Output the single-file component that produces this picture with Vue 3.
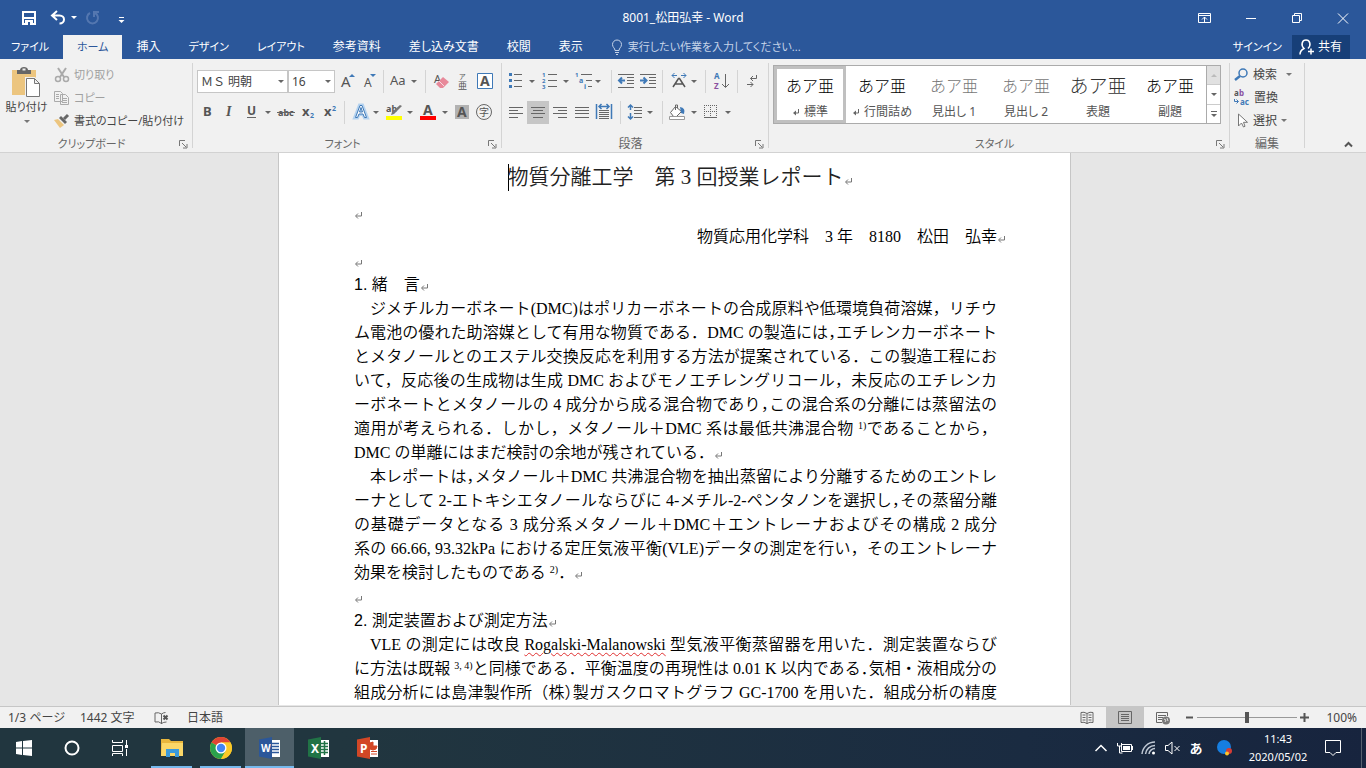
<script setup>
import { ref } from 'vue'

const tabs = ['ホーム', '挿入', 'デザイン', 'レイアウト', '参考資料', '差し込み文書', '校閲', '表示']
const activeTab = ref('ホーム')
const isKana = (t) => /^[ァ-ー]+$/.test(t)
const styles = [
  { name: '標準', mark: true, cls: '' },
  { name: '行間詰め', mark: true, cls: '' },
  { name: '見出し 1', cls: 'light' },
  { name: '見出し 2', cls: 'light' },
  { name: '表題', cls: 'big' },
  { name: '副題', cls: '' },
]
const activeStyle = ref('標準')
const zoom = ref(100)
</script>

<template>
  <div class="app" lang="ja">
    <svg class="defs" width="0" height="0" aria-hidden="true">
      <defs>
        <path id="dd" d="M0 0h6l-3 3z" />
        <path id="ret" d="M7.500 1v4H2M4 2.500L1.500 5 4 7.500" fill="none" stroke="#777" />
        <path id="launch" d="M.500 6V.500H6M3 3l4 4M8 4v4H4" fill="none" stroke="#777" />
      </defs>
    </svg>

    <header class="head">
      <div class="titlebar">
        <div class="quick">
          <button aria-label="上書き保存"><svg width="29" height="30" viewBox="14 0 29 30"><path d="M23 9h12v12H23z" fill="none" stroke="#fff" stroke-width="2" /><path d="M23 14h12v2H23zM25 17h8v5h-8z" fill="#fff" /><path d="M28 19h2v3h-2z" fill="#2b579a" /></svg></button>
          <button aria-label="元に戻す"><svg width="37" height="30" viewBox="43 0 37 30"><path d="M57 8l-5 4.500 5 4.500M52.500 12.500h7c6 0 6 8 0 8" fill="none" stroke="#fff" stroke-width="2" /><use href="#dd" x="71" y="13" fill="#fff" /></svg></button>
          <button aria-label="やり直し"><svg width="30" height="30" viewBox="80 0 30 30"><path d="M90 10a5.500 5.500 0 1 0 5 0M94 14V9h5" fill="none" stroke="#5477b0" stroke-width="2" /></svg></button>
          <button aria-label="クイック アクセス ツール バーのユーザー設定"><svg width="22" height="30" viewBox="110 0 22 30"><path d="M119 14.500h5" stroke="#fff" /><use href="#dd" x="118.500" y="17" fill="#fff" /></svg></button>
        </div>
        <h1>8001_松田弘幸 - Word</h1>
        <div class="win">
          <button aria-label="リボンの表示オプション"><svg width="46" height="30" viewBox="1182 0 46 30"><path d="M1198.500 10.500h12v9h-12zM1198 12.500h12M1204.500 19v-5M1202 16.500l2.500-2.500 2.500 2.500" fill="none" stroke="#fff" /></svg></button>
          <button aria-label="最小化"><svg width="46" height="30" viewBox="1228 0 46 30"><path d="M1246 15.500h10" stroke="#fff" /></svg></button>
          <button aria-label="元に戻す (縮小)"><svg width="46" height="30" viewBox="1274 0 46 30"><path d="M1292.500 12.500h7v7h-7zM1294.500 12v-1.500h7v7H1300" fill="none" stroke="#fff" /></svg></button>
          <button aria-label="閉じる"><svg width="46" height="30" viewBox="1320 0 46 30"><path d="M1338 10.500l10 10m0-10l-10 10" stroke="#fff" /></svg></button>
        </div>
      </div>
      <nav class="tabs">
        <button class="file kana">ファイル</button>
        <button v-for="t in tabs" :key="t" :class="{ on: t === activeTab, kana: isKana(t) }" @click="activeTab = t">{{ t }}</button>
        <label class="tell">
          <svg width="12" height="16" viewBox="0 0 12 16"><path d="M4 11.500C4 9 1.500 8.500 1.500 5.500a4.500 4.500 0 0 1 9 0C10.500 8.500 8 9 8 11.500zM4 13.500h4M5 15.500h2" fill="none" stroke="#c5d3e8" /></svg>
          <input type="text" aria-label="操作アシスト" placeholder="実行したい作業を入力してください...">
        </label>
        <button class="sign kana">サインイン</button>
        <button class="share"><svg width="17" height="18" viewBox="0 0 17 18"><path d="M2 16.500c0-3 2-5 4-6C2.500 7 4 2 8 2s5.500 5 2 8.500M10 13.500h6M13 10.500v6" fill="none" stroke="#fff" stroke-width="1.500" /></svg>共有</button>
      </nav>
    </header>

    <section class="ribbon">
      <div class="group clip">
        <div class="body cliprow">
          <button class="paste">
            <svg width="32" height="32" viewBox="14 66 32 32"><path d="M15 70h24v25H15z" fill="#ecc57f" /><path d="M20 74v-4h3c0-4 8-4 8 0h3v4z" fill="#666" /><path d="M25.500 69.500h3" stroke="#eee" stroke-width="2" /><path d="M28 77h10l6 6v15H28z" fill="#f1f1f1" /><path d="M29.500 78.500h8l5 5v13h-13zM37.500 78.500v5h5" fill="#fff" stroke="#777" /></svg>
            <span>貼り付け</span>
            <svg width="6" height="8" viewBox="0 0 6 8"><use href="#dd" y="4" fill="#777" /></svg>
          </button>
          <div class="stack">
            <button class="off"><svg width="16" height="16" viewBox="0 0 16 16"><path d="M4 1l6 9M12 1L6 10" stroke="#aaa" stroke-width="2" /><circle cx="4" cy="12" r="2.500" fill="none" stroke="#aaa" stroke-width="1.500" /><circle cx="12" cy="12" r="2.500" fill="none" stroke="#aaa" stroke-width="1.500" /></svg>切り取り</button>
            <button class="off"><svg width="16" height="16" viewBox="0 0 16 16"><path d="M.500 1.500h6l2 2v8h-8zM6.500 4.500h5l3 3v7h-8z" fill="#f1f1f1" stroke="#aaa" /><path d="M2 4.500h3M2 6.500h3M2 8.500h3M8 8.500h5M8 10.500h5M8 12.500h5" stroke="#aaa" /></svg>コピー</button>
            <button><svg width="16" height="16" viewBox="0 0 16 16"><path d="M0 7l4-1 6 6-4 3z" fill="#ecc57f" /><path d="M5 5l2-2 6 6-2 2z" fill="#666" /><path d="M10 6l4-4" stroke="#666" stroke-width="3" /></svg>書式のコピー/貼り付け</button>
          </div>
        </div>
        <div class="foot kana"><span>クリップボード</span><button aria-label="クリップボード"><svg width="9" height="9"><use href="#launch" /></svg></button></div>
      </div>

      <div class="group font">
        <div class="body rows">
          <div class="row">
            <span class="combo name"><select aria-label="フォント"><option>ＭＳ 明朝</option></select><svg width="6" height="3"><use href="#dd" fill="#666" /></svg></span>
            <span class="combo size"><select aria-label="フォント サイズ"><option>16</option></select><svg width="6" height="3"><use href="#dd" fill="#666" /></svg></span>
            <button aria-label="フォント サイズの拡大"><svg width="24" height="23" viewBox="335 70 24 23"><text x="341" y="87" class="g" font-size="15">A</text><path d="M349 77h6l-3-3z" class="bf" /></svg></button>
            <button aria-label="フォント サイズの縮小"><svg width="24" height="23" viewBox="359 70 24 23"><text x="364" y="87" class="g" font-size="12">A</text><path d="M370 74h6l-3 3z" class="bf" /></svg></button>
            <i class="sep"></i>
            <button aria-label="文字種の変換"><svg width="41" height="23" viewBox="384 70 41 23"><text x="390" y="85" class="g" font-size="13">Aa</text><use href="#dd" x="411" y="80" fill="#666" /></svg></button>
            <i class="sep"></i>
            <button aria-label="書式のクリア"><svg width="28" height="23" viewBox="426 70 28 23"><text x="434" y="83" class="g" font-size="11">A</text><path d="M436 84l7-7 6 5-6 6h-3z" fill="#e8899a" /><path d="M439 81l5 5" stroke="#f6dbe0" /></svg></button>
            <button aria-label="ルビ"><svg width="19" height="23" viewBox="454 70 19 23"><text x="459" y="79" class="g" font-size="7">ア</text><text x="458" y="89" class="g" font-size="9">亜</text></svg></button>
            <button aria-label="囲み線"><svg width="24" height="23" viewBox="473 70 24 23"><path d="M477.500 73.500h15v15h-15z" fill="#fff" stroke="#3f79b7" /><text x="480" y="86" class="g bold" font-size="14">A</text></svg></button>
          </div>
          <div class="row">
            <button aria-label="太字"><svg width="21" height="23" viewBox="197 101 21 23"><text x="203" y="116" class="g bold" font-size="13">B</text></svg></button>
            <button aria-label="斜体"><svg width="22" height="23" viewBox="218 101 22 23"><text x="226" y="116" class="g ital" font-size="14">I</text></svg></button>
            <button aria-label="下線"><svg width="34" height="23" viewBox="240 101 34 23"><text x="247" y="115" class="g bold" font-size="12">U</text><path d="M247 117.500h9" class="gs" /><use href="#dd" x="265" y="111" fill="#666" /></svg></button>
            <button aria-label="取り消し線"><svg width="24" height="23" viewBox="274 101 24 23"><text x="278" y="116" class="g bold" font-size="9">abc</text><path d="M277 112.500h18" class="gs" /></svg></button>
            <button aria-label="下付き"><svg width="22" height="23" viewBox="298 101 22 23"><text x="302" y="116" class="g bold" font-size="13">x</text><text x="310" y="118" class="bf bold" font-size="7">2</text></svg></button>
            <button aria-label="上付き"><svg width="24" height="23" viewBox="320 101 24 23"><text x="324" y="116" class="g bold" font-size="13">x</text><text x="332" y="111" class="bf bold" font-size="7">2</text></svg></button>
            <i class="sep"></i>
            <button aria-label="文字の効果と体裁"><svg width="37" height="23" viewBox="345 101 37 23"><path d="M354.500 118l5-13h3l5 13h-3l-1.500-3.500h-4l-1.500 3.500zM359.500 112h3l-1.500-4z" fill="#fff" fill-rule="evenodd" stroke="#b5d3f0" stroke-width="3" /><path d="M355.500 117.500l4.500-12h2l4.500 12h-2l-1.500-3.500h-4l-1.500 3.500zM359.500 112h3l-1.500-4.500z" fill="#fff" fill-rule="evenodd" stroke="#3f79b7" /><use href="#dd" x="373" y="111" fill="#666" /></svg></button>
            <button aria-label="蛍光ペンの色"><svg width="34" height="23" viewBox="382 101 34 23"><text x="386" y="112" class="g bold" font-size="9">ab</text><path d="M402 106l-8 8-3 1 1-3 8-7z" fill="#777" /><path d="M386 116h16v4h-16z" fill="#ff0" /><use href="#dd" x="407" y="111" fill="#666" /></svg></button>
            <button aria-label="フォントの色"><svg width="35" height="23" viewBox="416 101 35 23"><text x="423" y="115" class="g bold" font-size="14">A</text><path d="M420 116h16v4h-16z" fill="red" /><use href="#dd" x="442" y="111" fill="#666" /></svg></button>
            <button aria-label="文字の網かけ"><svg width="22" height="23" viewBox="451 101 22 23"><path d="M455 105h14v14h-14z" fill="#b2b2b2" /><text x="457" y="117" class="g bold" font-size="14">A</text></svg></button>
            <button aria-label="囲い文字"><svg width="24" height="23" viewBox="473 101 24 23"><circle cx="484" cy="112" r="7.500" class="gs" /><text x="479" y="116" class="g" font-size="10">字</text></svg></button>
          </div>
        </div>
        <div class="foot kana"><span>フォント</span><button aria-label="フォント"><svg width="9" height="9"><use href="#launch" /></svg></button></div>
      </div>

      <div class="group para">
        <div class="body rows">
          <div class="row">
            <button aria-label="箇条書き"><svg width="33" height="23" viewBox="506 70 33 23"><path d="M509 73h3v3h-3zM509 79h3v3h-3zM509 85h3v3h-3z" class="bf" /><path d="M514 74.500h8M514 80.500h8M514 86.500h8" class="gs" /><use href="#dd" x="529" y="80" fill="#666" /></svg></button>
            <button aria-label="段落番号"><svg width="34" height="23" viewBox="539 70 34 23"><text x="542" y="77" class="bf bold" font-size="6">1</text><text x="542" y="83" class="bf bold" font-size="6">2</text><text x="542" y="89" class="bf bold" font-size="6">3</text><path d="M548 74.500h9M548 80.500h9M548 86.500h9" class="gs" /><use href="#dd" x="563" y="80" fill="#666" /></svg></button>
            <button aria-label="アウトライン"><svg width="38" height="23" viewBox="573 70 38 23"><text x="575" y="77" class="bf bold" font-size="6">1</text><text x="579" y="83" class="bf bold" font-size="7">a</text><text x="584" y="89" class="bf bold" font-size="7">i</text><path d="M581 74.500h11M586 80.500h6M588 86.500h4" class="gs" /><use href="#dd" x="595" y="80" fill="#666" /></svg></button>
            <i class="sep"></i>
            <button aria-label="インデントを減らす"><svg width="25" height="23" viewBox="612 70 25 23"><path d="M618 74.500h16M627 77.500h7M627 80.500h7M627 83.500h7M618 87.500h16" class="gs" /><path d="M625 80.500h-6M622 77.500l-3 3 3 3" class="bs" /></svg></button>
            <button aria-label="インデントを増やす"><svg width="25" height="23" viewBox="637 70 25 23"><path d="M640 74.500h16M649 77.500h7M649 80.500h7M649 83.500h7M640 87.500h16" class="gs" /><path d="M640 80.500h6M643.500 77.500l3 3-3 3" class="bs" /></svg></button>
            <i class="sep"></i>
            <button aria-label="拡張書式"><svg width="42" height="23" viewBox="663 70 42 23"><path d="M673 87l5.500-8.500h1L685 87M675.500 84h7" fill="none" stroke="#555" stroke-width="1.500" /><path d="M677 75.500h-5M674.500 73l-2.500 2.500 2.500 2.500M681 75.500h5M683.500 73l2.500 2.500-2.500 2.500" class="bs1" /><use href="#dd" x="691" y="80" fill="#666" /></svg></button>
            <i class="sep"></i>
            <button aria-label="並べ替え"><svg width="31" height="23" viewBox="706 70 31 23"><text x="714" y="79" class="bf bold" font-size="8">A</text><text x="714" y="89" fill="#8a50a0" class="bold" font-size="8">Z</text><path d="M725.500 74v13M722 84l3.500 3.500L729 84" class="gs" /></svg></button>
            <i class="sep"></i>
            <button aria-label="編集記号の表示"><svg width="27" height="23" viewBox="738 70 27 23"><path d="M756.500 75v3.500h-6M753 76l-2.500 2.500L753 81M747 84.500h6M750.500 82l2.500 2.500-2.500 2.500" class="gs" /></svg></button>
          </div>
          <div class="row">
            <button aria-label="左揃え"><svg width="21" height="23" viewBox="506 101 21 23"><path d="M509 107.500h14M509 110.500h9M509 113.500h14M509 117.500h9" class="gs" /></svg></button>
            <button class="pressed" aria-label="中央揃え"><svg width="22" height="23" viewBox="527 101 22 23"><path d="M531 107.500h14M533 110.500h10M531 113.500h14M533 117.500h10" class="gs" /></svg></button>
            <button aria-label="右揃え"><svg width="22" height="23" viewBox="549 101 22 23"><path d="M553 107.500h14M558 110.500h9M553 113.500h14M558 117.500h9" class="gs" /></svg></button>
            <button aria-label="両端揃え"><svg width="22" height="23" viewBox="571 101 22 23"><path d="M575 107.500h14M575 110.500h14M575 113.500h14M575 117.500h14" class="gs" /></svg></button>
            <button aria-label="均等割り付け"><svg width="27" height="23" viewBox="593 101 27 23"><path d="M596.500 104v15M611.500 104v15M599 106.500h10M601.500 104l-2.500 2.500 2.500 2.500M606.500 104l2.500 2.500-2.500 2.500" class="bs1" stroke-width="1.500" /><path d="M599 110.500h10M599 112.500h10M599 114.500h10M599 116.500h10M599 118.500h10" class="gs" /></svg></button>
            <i class="sep"></i>
            <button aria-label="行間"><svg width="41" height="23" viewBox="621 101 41 23"><path d="M630.500 105v5M628 107.500l2.500-2.500 2.500 2.500M630.500 113v6M628 116.500l2.500 2.500 2.500-2.500" class="bs1" stroke-width="1.500" /><path d="M634 107.500h8M634 110.500h8M634 113.500h8M634 117.500h8" class="gs" /><use href="#dd" x="647" y="111" fill="#666" /></svg></button>
            <i class="sep"></i>
            <button aria-label="塗りつぶし"><svg width="39" height="23" viewBox="663 101 39 23"><path d="M675.500 106.500l6 5-5 5h-3l-3-4zM675.500 110v-5h2v3" fill="#fff" stroke="#666" /><path d="M680 107q6 1 4 7l-3-1z" class="bf" /><path d="M669.500 116.500h15v3h-15z" fill="#fff" stroke="#999" /><use href="#dd" x="691" y="111" fill="#666" /></svg></button>
            <button aria-label="罫線"><svg width="34" height="23" viewBox="702 101 34 23"><path d="M704.500 105v12M710.500 105v12M716.500 105v12M704 105.500h13M704 111.500h13" class="gs" stroke-dasharray="1 1" /><path d="M704 117.500h13" class="gs" /><use href="#dd" x="725" y="111" fill="#666" /></svg></button>
          </div>
        </div>
        <div class="foot"><span>段落</span><button aria-label="段落の設定"><svg width="9" height="9"><use href="#launch" /></svg></button></div>
      </div>

      <div class="group style">
        <div class="gallery">
          <button v-for="s in styles" :key="s.name" class="cell" :class="{ on: s.name === activeStyle }" @click="activeStyle = s.name">
            <span class="sample" :class="s.cls">あア亜</span>
            <span class="cap"><svg v-if="s.mark" width="9" height="8"><path d="M6.500 1v4H3" class="gs" /><path d="M4 2.500v5L1 5z" fill="#666" /></svg>{{ s.name }}</span>
          </button>
          <div class="scroll">
            <button class="dim" aria-label="前の行"><svg width="8" height="5"><path d="M1 4h6L4 1z" fill="#bbb" /></svg></button>
            <button aria-label="次の行"><svg width="8" height="5"><path d="M1 1h6L4 4z" fill="#666" /></svg></button>
            <button aria-label="その他"><svg width="8" height="8"><path d="M1 1.500h6" class="gs" /><path d="M1 4h6L4 7z" fill="#666" /></svg></button>
          </div>
        </div>
        <div class="foot kana"><span>スタイル</span><button aria-label="スタイル"><svg width="9" height="9"><use href="#launch" /></svg></button></div>
      </div>

      <div class="group edit">
        <div class="body stack">
          <button><svg width="15" height="16" viewBox="0 0 15 16"><circle cx="9" cy="6" r="4" fill="none" stroke="#3f79b7" stroke-width="1.500" /><path d="M6 9l-5 4" stroke="#3f79b7" stroke-width="2.500" /></svg>検索<svg class="far" width="6" height="3"><use href="#dd" fill="#777" /></svg></button>
          <button><svg width="16" height="18" viewBox="0 0 16 18"><text x="0" y="7" class="g bold" font-size="8">a</text><text x="5" y="7" fill="#8a50a0" class="bold" font-size="8">b</text><text x="6" y="16" class="bf bold" font-size="8">ac</text><path d="M.500 10v2.500H4M2.500 10.500l2 2-2 2" class="bs1" /></svg>置換</button>
          <button><svg width="15" height="16" viewBox="0 0 15 16"><path d="M4.500 1v12l3-3 2 4 1.500-.700-1.500-4h4z" fill="#fff" stroke="#777" /></svg>選択<svg class="near" width="6" height="3"><use href="#dd" fill="#777" /></svg></button>
        </div>
        <div class="foot"><span>編集</span></div>
      </div>
      <button class="fold" aria-label="リボンを折りたたむ"><svg width="9" height="7"><path d="M1 5.500l3.500-3.500L8 5.500" fill="none" stroke="#555" stroke-width="2" /></svg></button>
    </section>

    <main class="desk">
      <article class="page">
        <h2 class="title"><i class="caret"></i>物質分離工学　第 3 回授業レポート<svg class="ret" width="9" height="9"><use href="#ret" /></svg></h2>
        <p><svg class="ret" width="9" height="9"><use href="#ret" /></svg></p>
        <p class="author">物質応用化学科　3 年　8180　松田　弘幸<svg class="ret" width="9" height="9"><use href="#ret" /></svg></p>
        <p><svg class="ret" width="9" height="9"><use href="#ret" /></svg></p>
        <h3>1. 緒　言<svg class="ret" width="9" height="9"><use href="#ret" /></svg></h3>
        <p>
          <span class="ln in">ジメチルカーボネート(DMC)はポリカーボネートの合成原料や低環境負荷溶媒，リチウ</span>
          <span class="ln">ム電池の優れた助溶媒として有用な物質である．DMC の製造には<span class="half">，</span>エチレンカーボネート</span>
          <span class="ln">とメタノールとのエステル交換反応を利用する方法が提案されている．この製造工程にお</span>
          <span class="ln">いて，反応後の生成物は生成 DMC およびモノエチレングリコール，未反応のエチレンカ</span>
          <span class="ln">ーボネートとメタノールの 4 成分から成る混合物であり<span class="half">，</span>この混合系の分離には蒸留法の</span>
          <span class="ln">適用が考えられる．しかし，メタノール＋DMC 系は最低共沸混合物 <sup>1)</sup>であることから，</span>
          <span class="ln end">DMC の単離にはまだ検討の余地が残されている．<svg class="ret" width="9" height="9"><use href="#ret" /></svg></span>
        </p>
        <p>
          <span class="ln in">本レポートは<span class="half">，</span>メタノール＋DMC 共沸混合物を抽出蒸留により分離するためのエントレ</span>
          <span class="ln">ーナとして 2-エトキシエタノールならびに 4-メチル-2-ペンタノンを選択し<span class="half">，</span>その蒸留分離</span>
          <span class="ln">の基礎データとなる 3 成分系メタノール＋DMC＋エントレーナおよびその構成 2 成分</span>
          <span class="ln">系の 66.66, 93.32kPa における定圧気液平衡(VLE)データの測定を行い，そのエントレーナ</span>
          <span class="ln end">効果を検討したものである <sup>2)</sup>．<svg class="ret" width="9" height="9"><use href="#ret" /></svg></span>
        </p>
        <p><svg class="ret" width="9" height="9"><use href="#ret" /></svg></p>
        <h3>2. 測定装置および測定方法<svg class="ret" width="9" height="9"><use href="#ret" /></svg></h3>
        <p>
          <span class="ln in">VLE の測定には改良 <span class="typo">Rogalski-Malanowski</span> 型気液平衡蒸留器を用いた．測定装置ならび</span>
          <span class="ln">に方法は既報 <sup>3, 4)</sup>と同様である．平衡温度の再現性は 0.01 K 以内である<span class="half">．</span>気相・液相成分の</span>
          <span class="ln">組成分析には島津製作所（株<span class="half">）</span>製ガスクロマトグラフ GC-1700 を用いた．組成分析の精度</span>
        </p>
      </article>
    </main>

    <footer class="status">
      <span class="pages">1/3 ページ</span><span class="chars">1442 文字</span>
      <button class="proof" aria-label="文章校正"><svg width="16" height="14" viewBox="0 0 16 14"><path d="M7.500 3q-3-2-6.500-1v9q4-1 6.500 1.500zV13M7.500 3q2-1.500 4-1.500M7.500 12.500q2-1.500 5-1.500" class="gs" /><path d="M9.500 4.500l4 4m0-4l-4 4" stroke="#555" stroke-width="2" /></svg></button>
      <span class="lang">日本語</span>
      <button class="view" aria-label="閲覧モード"><svg width="14" height="14"><path d="M7 2.500Q4 .500 1 1.500v10q3-1 6 1 3-2 6-1v-10Q10 .500 7 2.500zV13M2.500 4h3M2.500 6.500h3M2.500 9h3M8.500 4h3M8.500 6.500h3M8.500 9h3" class="gs" /></svg></button>
      <button class="view pressed" aria-label="印刷レイアウト"><svg width="14" height="14"><path d="M.500.500h13v12H.500zM3 3.500h8M3 5.500h8M3 7.500h8M3 9.500h8" class="gs" /></svg></button>
      <button class="view" aria-label="Web レイアウト"><svg width="14" height="14"><path d="M11.500 5V1.500H.500v10H6M2 4.500h8M2 6.500h5M2 8.500h4" class="gs" /><circle cx="10" cy="9.500" r="4" fill="#777" /><path d="M8 8l2 1-1 2M11 7l1 3" stroke="#ddd" fill="none" /></svg></button>
      <button class="zb" aria-label="縮小"><svg width="9" height="9"><path d="M1 4.500h7" stroke="#555" stroke-width="2" /></svg></button>
      <input v-model="zoom" class="zoom" type="range" min="10" max="190" aria-label="ズーム">
      <button class="zb" aria-label="拡大"><svg width="9" height="9"><path d="M0 4.500h9M4.500 0v9" stroke="#555" stroke-width="2" /></svg></button>
      <span class="pct">{{ zoom }}%</span>
    </footer>

    <footer class="task">
      <button class="sys" aria-label="スタート"><svg width="24" height="24"><path d="M4 6l6-1v6.500H4zM11 5l9-1v7.500h-9zM4 12.500h6V19l-6-1zM11 12.500h9V20l-9-1z" fill="#fff" /></svg></button>
      <button class="sys" aria-label="Cortana"><svg width="24" height="24"><circle cx="12" cy="12" r="6.500" fill="none" stroke="#fff" stroke-width="2" /></svg></button>
      <button class="sys" aria-label="タスク ビュー"><svg width="24" height="24"><path d="M4.500 4v2.500h10V4M4.500 9.500h10v6h-10zM4.500 20v-2.500h10V20M18.500 4v5M18.500 13v7" fill="none" stroke="#fff" /><path d="M17 9h3v3h-3z" fill="#fff" /></svg></button>
      <button class="open first" aria-label="エクスプローラー"><svg width="24" height="24"><path d="M1 3h8l2 2h12v15H1z" fill="#e9b73d" /><path d="M2 7h21v13H1z" fill="#fbd868" /><path d="M6 13h13v8h-4v-4h-5v4H6z" fill="#3b9bdc" /></svg></button>
      <button class="open" aria-label="Google Chrome"><svg width="24" height="24"><circle cx="12" cy="12" r="11" fill="#fbc928" /><path d="M12 12L2.500 6.500A11 11 0 0 1 21.500 6.500H12z" fill="#e04434" /><path d="M12 12L2.500 6.500A11 11 0 0 0 12 23l5-8z" fill="#2ba24c" /><path d="M12 6.500h9.500a11 11 0 0 1-9.500 16.500l5-9z" fill="#fbc928" /><circle cx="12" cy="12" r="5.500" fill="#fff" /><circle cx="12" cy="12" r="4.200" fill="#4285f4" /></svg></button>
      <button class="active" aria-label="Word"><svg width="24" height="24"><path d="M12 4h10v17H12z" fill="#fff" /><path d="M14 7.500h7M14 10.500h7M14 13.500h7M14 16.500h7" stroke="#2b579a" stroke-width="1.500" /><path d="M1 3.500L14 1v22L1 20.500z" fill="#2b579a" /><text x="3" y="16" fill="#fff" class="bold" font-size="10">W</text></svg></button>
      <button aria-label="Excel"><svg width="24" height="24"><path d="M12 4h10v17H12z" fill="#fff" /><path d="M14 7.500h7M14 10.500h7M14 13.500h7M14 16.500h7M17.500 5v14" stroke="#217346" stroke-width="1.500" /><path d="M1 3.500L14 1v22L1 20.500z" fill="#217346" /><text x="4" y="17" fill="#fff" class="bold" font-size="12">X</text></svg></button>
      <button aria-label="PowerPoint"><svg width="24" height="24"><path d="M12 4h10v17H12z" fill="#fff" /><path d="M15 15.500h6M15 18h6M17 6v4h4a4 4 0 1 1-4-4z" fill="#d24726" stroke="#d24726" /><path d="M1 3.500L14 1v22L1 20.500z" fill="#d24726" /><text x="4" y="17" fill="#fff" class="bold" font-size="12">P</text></svg></button>
      <div class="tray">
        <button aria-label="隠れているインジケーター"><svg width="24" height="24"><path d="M6.500 15l5.500-5.500 5.500 5.500" fill="none" stroke="#fff" stroke-width="1.500" /></svg></button>
        <button aria-label="バッテリー"><svg width="24" height="24"><path d="M8.500 8.500h10v7h-10zM19.500 10v4M4.500 7v3h4V7M6.500 10v7h3" fill="none" stroke="#fff" /><path d="M10 10h7v4h-7z" fill="#fff" /></svg></button>
        <button aria-label="ネットワーク"><svg width="24" height="24"><path d="M5 18A13 13 0 0 1 18 6M8.500 18A9.500 9.500 0 0 1 18 9.500M12 18a6 6 0 0 1 6-5.500" fill="none" stroke="#bfc8d4" stroke-width="1.500" /><circle cx="16.500" cy="17" r="1.500" fill="#fff" /></svg></button>
        <button aria-label="音量"><svg width="24" height="24"><path d="M4.500 9.500H7l4-3.500v12l-4-3.500H4.500zM13.500 10l5 5m0-5l-5 5" fill="none" stroke="#fff" /></svg></button>
        <button class="ime">あ</button>
        <button class="orb" aria-label="IME"><svg width="24" height="24"><circle cx="12" cy="11" r="7" fill="#167ee0" /><circle cx="17" cy="15" r="3" fill="#d63c35" /><circle cx="15" cy="17.500" r="2" fill="#ffc629" /></svg></button>
        <button class="clock"><span>11:43</span><span>2020/05/02</span></button>
        <button class="note" aria-label="通知"><svg width="24" height="24"><path d="M4.500 4.500h15v12H15L12 19.500 9 16.500H4.500z" fill="none" stroke="#fff" /></svg></button>
      </div>
    </footer>
  </div>
</template>

<style>
body { margin: 0; }
</style>

<style scoped>
.app { min-height: 100vh; display: flex; flex-direction: column; font: 12px/16px "Noto Sans", "Noto Sans CJK JP", sans-serif; font-feature-settings: "palt"; color: #444; background: #e6e6e6; overflow: hidden; }
* { box-sizing: border-box; }
button { font: inherit; font-feature-settings: inherit; color: inherit; background: none; border: 0; padding: 0; margin: 0; white-space: nowrap; }
svg { display: block; flex: none; }
.defs { position: absolute; }
.g { fill: #555; }
.gs { stroke: #666; fill: none; }
.bf { fill: #3f79b7; }
.bs { stroke: #3f79b7; fill: none; stroke-width: 2; }
.bs1 { stroke: #3f79b7; fill: none; }
.bold { font-weight: bold; }
.ital { font-family: "Liberation Serif", serif; font-style: italic; font-weight: bold; }
.kana { font-size: 11px; }

.head { background: #2b579a; color: #fff; }
.titlebar { display: grid; grid-template-columns: 1fr auto 1fr; align-items: center; height: 35px; }
.quick { display: flex; padding-left: 14px; }
.titlebar h1 { margin: 0; font-size: 12px; font-weight: normal; }
.win { display: flex; justify-content: flex-end; }
.tabs { display: flex; height: 24px; }
.tabs > button { padding: 0 14px; }
.tabs > .file { width: 63px; padding: 0 0 0 11px; text-align: left; }
.tabs > .on { background: #f1f1f1; color: #2b579a; }
.tell { display: flex; align-items: center; gap: 5px; margin-left: 14px; flex: 1; }
.tell input { flex: 1; min-width: 0; font: inherit; font-size: 11px; font-feature-settings: "palt"; border: 0; padding: 0; background: none; color: #fff; outline: 0; }
.tell input::placeholder { color: #c5d3e8; opacity: 1; }
.tabs > .sign { padding: 0 10px; }
.tabs > .share { display: flex; align-items: center; gap: 3px; background: #173f78; padding: 0 8px 0 6px; margin-right: 16px; }

.ribbon { display: flex; height: 94px; background: #f1f1f1; border-bottom: 1px solid #d2d2d2; padding: 4px 0; }
.group { display: flex; flex-direction: column; justify-content: space-between; border-right: 1px solid #d4d4d4; padding: 0 4px; flex: none; }
.foot { display: flex; align-items: center; height: 16px; color: #666; margin-bottom: -4px; }
.foot span { flex: 1; text-align: center; }
.clip { width: 193px; }
.font { width: 309px; }
.para { width: 267px; }
.style { width: 461px; }
.edit { width: 75px; }
.body { display: flex; }
.cliprow { gap: 5px; font-size: 11px; }
.paste { width: 45px; display: flex; flex-direction: column; align-items: center; gap: 1px; padding-top: 3px; }
.stack { display: flex; flex-direction: column; }
.stack button { display: flex; align-items: center; gap: 4px; height: 23px; }
.off { color: #a0a0a0; }
.rows { flex-direction: column; gap: 8px; padding-top: 7px; }
.row { display: flex; align-items: center; height: 23px; }
.sep { width: 1px; height: 23px; background: #d4d4d4; flex: none; }
.combo { position: relative; display: block; font-feature-settings: normal; }
.combo select { appearance: none; width: 100%; height: 23px; border: 1px solid #c6c6c6; border-radius: 0; background: #fff; font: inherit; color: #444; padding: 0 3px; display: block; }
.combo svg { position: absolute; right: 4px; top: 10px; }
.name { width: 91px; }
.size { width: 47px; }
.pressed { background: #c6c6c6; }
.gallery { display: flex; margin: 2px 4px 0 0; height: 59px; border: 1px solid #ababab; background: #fff; }
.cell { flex: 1; display: flex; flex-direction: column; align-items: center; justify-content: space-between; padding: 4px 0 0; border: 3px solid transparent; color: #555; }
.cell.on { border-color: #c0c0c0; }
.sample { font: 16px/24px "Noto Sans CJK JP Light", "Noto Sans CJK JP", sans-serif; color: #000; font-weight: 300; }
.sample.light { color: #777; }
.sample.big { font-size: 19px; color: #333; }
.cap { display: flex; align-items: center; gap: 3px; line-height: 16px; }
.scroll { width: 14px; display: flex; flex-direction: column; border-left: 1px solid #ababab; }
.scroll button { flex: 1; display: grid; place-items: center; border-top: 1px solid #ccc; }
.scroll .dim { background: #e1e1e1; border-top: 0; }
.edit .far { margin-left: 5px; }
.fold { margin-left: auto; align-self: flex-end; padding: 0 13px 0 0; }

.desk { flex: 1; height: 0; min-height: 553px; overflow: hidden; background: #e6e6e6; padding-right: 17px; }
.page { width: 793px; max-width: 100%; min-height: 100%; margin: 0 auto; padding: 0 73px 0 75px; background: #fff; border: solid #c6c6c6; border-width: 0 1px; color: #000; font: 16px/24px "Liberation Serif", "Noto Sans CJK JP DemiLight", "Noto Sans CJK JP Light", "Noto Sans CJK JP", serif; font-feature-settings: normal; }
.page p, .page h2, .page h3 { margin: 0; font-weight: 400; font-size: 16px; min-height: 24px; white-space: nowrap; }
.page h2.title { font-size: 21px; line-height: 48px; text-align: center; color: #222; }
.page h3 { font-family: "Liberation Sans", "Noto Sans CJK JP DemiLight", "Noto Sans CJK JP Light", "Noto Sans CJK JP", sans-serif; }
.author { text-align: right; }
.ret { display: inline-block; margin-right: -9px; vertical-align: -2px; }
.ln { display: block; height: 24px; text-align: justify; text-align-last: justify; }
.in { padding-left: 16px; }
.end { text-align-last: left; }
.half { font-feature-settings: "halt"; }
.ln sup { font-size: 10px; line-height: 10px; vertical-align: 5px; }
.typo { text-decoration: underline wavy #e03030 1px; text-underline-offset: 2px; }
.caret { display: inline-block; width: 1px; height: 27px; margin-right: -1px; background: #000; vertical-align: -7px; }

.status { display: flex; align-items: center; height: 22px; background: #f1f1f1; border-top: 1px solid #c6c6c6; padding-left: 8px; }
.pages { min-width: 72px; }
.chars { min-width: 74px; }
.proof { margin-right: 17px; }
.lang { flex: 1; }
.view { width: 38px; height: 21px; display: grid; place-items: center; }
.zb { padding: 0 3px; }
.zoom { appearance: none; width: 100px; height: 12px; margin: 0; background: linear-gradient(#999, #999) center / 100% 1px no-repeat; }
.zoom::-webkit-slider-thumb { appearance: none; width: 4px; height: 11px; background: #555; }
.pct { width: 54px; text-align: right; padding-right: 9px; }

.task { display: flex; height: 40px; background: linear-gradient(90deg, #21363f 0, #21363f 25%, #1a2b41 75%, #17243e 100%); color: #fff; }
.task > button { width: 49px; display: grid; place-items: center; position: relative; }
.task > .sys { width: 48px; }
.task > .first { margin-left: 3px; }
.task > .open::after, .task > .active::after { content: ""; position: absolute; left: 4px; right: 4px; bottom: 0; height: 2px; background: #76b9ed; }
.task > .active { background: #4d5f69; }
.task > .active::after { left: 0; right: 0; }
.tray { margin-left: auto; display: flex; align-items: center; border-right: 1px solid #56616f; margin-right: 4px; }
.tray .ime { width: 22px; font-size: 13px; font-weight: bold; }
.tray .orb { margin: 0 4px 0 5px; }
.clock { display: flex; flex-direction: column; align-items: center; font-size: 11px; line-height: 18px; width: 76px; }
.note { padding: 0 16px 0 5px; }
</style>
